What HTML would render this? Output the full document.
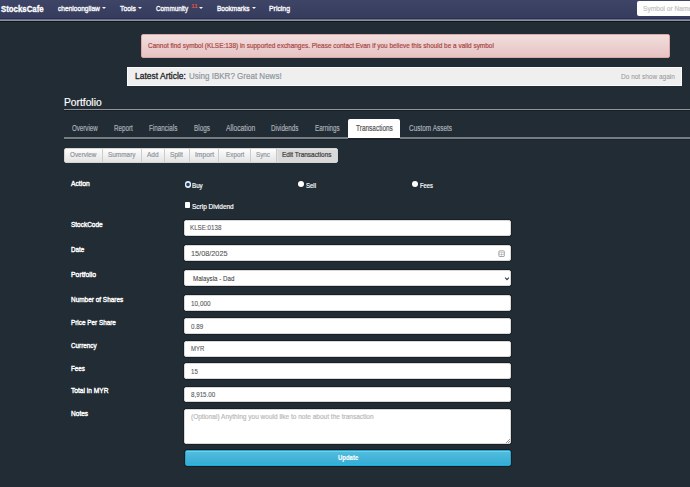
<!DOCTYPE html>
<html><head><meta charset="utf-8">
<style>
*{box-sizing:border-box;margin:0;padding:0}
html,body{width:690px;height:487px;overflow:hidden}
body{background:#222c34;font-family:"Liberation Sans",sans-serif;position:relative;color:#fff}
.a{position:absolute}
.t{position:absolute;white-space:nowrap;transform-origin:0 0;-webkit-text-stroke:0.2px currentColor}
#nav{left:0;top:0;width:690px;height:18px;background:linear-gradient(#3f4567,#363c5c)}
.car{position:absolute;width:0;height:0;border-left:2px solid transparent;border-right:2px solid transparent;border-top:2px solid #f4f5f8;top:7px}
#search{left:637px;top:1px;width:60px;height:15px;background:#fff;border-radius:2px}
#alert{left:140.5px;top:33.5px;width:529px;height:24.5px;border:1px solid #dca7a7;border-radius:2px;background:linear-gradient(#f2dede,#e7c3c3)}
#art{left:127px;top:67px;width:555px;height:19px;background:#efefef;border:1px solid #fafafa}
#pl{left:64px;top:109px;width:626px;height:1px;background:#90959a;box-shadow:0 1px 0 #181f26}
#tabact{left:348px;top:119px;width:52px;height:19px;background:#fff;border-radius:2px 2px 0 0}
#tl{left:64px;top:137px;width:626px;height:2px;background:#757c82}
#sub{left:64px;top:147.6px;width:273.6px;height:15.4px;border-radius:2px;background:linear-gradient(#fdfdfd,#e4e4e4);border:1px solid #d4d4d4;overflow:hidden}
.sd{position:absolute;top:0;width:1px;height:14px;background:#cdcdcd}
#subact{left:210.6px;top:0;width:62px;height:14px;background:#d9d9d9;box-shadow:inset 0 0 0 1px #e2e2e2;border-left:1px solid #c8c8c8}
.inp{left:184.4px;width:327px;height:16.2px;background:#fff;border-radius:2px;border:1px solid #d8d8d8;box-shadow:0 0 0 0.7px #161c22}
.rad{width:6px;height:6px;border-radius:50%;background:#fff}
#upd{left:184.7px;top:450.3px;width:326.6px;height:15.7px;border-radius:2px;background:linear-gradient(#55bddd,#33acd6);border:1px solid #2aa4c9;box-shadow:0 0 0 0.7px #15191e,inset 0 1px 0 #6ad2f0,inset 0 -1px 0 #27b6e6}
</style></head><body>
<div class="a" id="nav"></div>
<div class="a" style="left:0;top:18px;width:690px;height:1px;background:#2a3050"></div>
<div class="a" style="left:0;top:19px;width:690px;height:1px;background:#6a6e8a"></div>
<div class="a" style="left:0;top:20px;width:690px;height:1px;background:#8c9296"></div>
<div class="a" style="left:0;top:21px;width:690px;height:1px;background:#0e161d"></div>
<div class="car" style="left:102.2px"></div>
<div class="car" style="left:138.3px"></div>
<div class="car" style="left:199px"></div>
<div class="car" style="left:252px"></div>
<div class="a" id="search"></div>

<div class="a" id="alert"></div>
<div class="a" id="art"></div>
<div class="a" id="pl"></div>
<div class="a" id="tl"></div>
<div class="a" style="left:64px;top:139px;width:626px;height:1px;background:#1b2229"></div>
<div class="a" id="tabact"></div>
<div class="a" style="left:348px;top:138px;width:52px;height:2px;background:#1b2229"></div>

<div class="a" id="sub">
  <div class="sd" style="left:36.8px"></div>
  <div class="sd" style="left:75.8px"></div>
  <div class="sd" style="left:99.1px"></div>
  <div class="sd" style="left:124.1px"></div>
  <div class="sd" style="left:153.2px"></div>
  <div class="sd" style="left:184.7px"></div>
  <div class="a" id="subact"></div>
</div>

<div class="a rad" style="left:184.5px;top:181.4px;width:6.8px;height:6.8px;background:radial-gradient(circle at 50% 50%,#1f3f73 0,#1f3f73 1.1px,#6f94c6 1.7px,#eef3f9 2.2px)"></div>
<div class="a rad" style="left:298.2px;top:181.1px;width:6.2px;height:6.2px"></div>
<div class="a rad" style="left:411.6px;top:181.1px;width:6.2px;height:6.2px"></div>
<div class="a" style="left:184.6px;top:202.2px;width:5.9px;height:5.8px;background:#fff;border-radius:0.8px"></div>

<div class="a inp" style="top:220px"></div>
<div class="a inp" style="top:245px"></div>
<div class="a inp" style="top:270.2px"></div>
<div class="a inp" style="top:295.4px;height:15.5px"></div>
<div class="a inp" style="top:318.3px;height:15.6px"></div>
<div class="a inp" style="top:341px;height:15.5px"></div>
<div class="a inp" style="top:363.4px;height:15.8px"></div>
<div class="a inp" style="top:386.6px;height:15.5px"></div>
<div class="a inp" style="top:409px;height:34.6px"></div>
<div class="a" id="upd"></div>
<svg class="a" style="left:497.5px;top:249.6px" width="7" height="7" viewBox="0 0 7 7"><rect x="0.9" y="0.9" width="5.4" height="5.6" rx="0.6" fill="none" stroke="#8a8a8a" stroke-width="0.8"/><path d="M0.9 2.7H6.3M0.9 4.5H6.3M3.6 2.7V6.5" stroke="#b0b0b0" stroke-width="0.6"/></svg>
<svg class="a" style="left:504px;top:275.5px" width="6" height="5" viewBox="0 0 6 5"><path d="M1.1 1.6L3 3.6L4.9 1.6" fill="none" stroke="#3a3a3a" stroke-width="1.1"/></svg>
<div class="a" style="left:505.5px;top:438.5px;width:4px;height:4px;background:linear-gradient(135deg,transparent 45%,#999 45%,#999 55%,transparent 55%,transparent 75%,#999 75%,#999 85%,transparent 85%)"></div>
<div class="t" style="left:1.40px;top:3.65px;font-size:9.39px;line-height:9.39px;color:#ffffff;font-weight:bold;transform:scaleX(0.8338);-webkit-text-stroke:0.35px #fff">StocksCafe</div>
<div class="t" style="left:57.60px;top:4.74px;font-size:8.11px;line-height:8.11px;color:#f4f5f8;font-weight:normal;transform:scaleX(0.8163);-webkit-text-stroke:0.42px #f4f5f8">chenloongliaw</div>
<div class="t" style="left:120.00px;top:4.74px;font-size:8.11px;line-height:8.11px;color:#f4f5f8;font-weight:normal;transform:scaleX(0.8383);-webkit-text-stroke:0.42px #f4f5f8">Tools</div>
<div class="t" style="left:155.90px;top:4.74px;font-size:8.11px;line-height:8.11px;color:#f4f5f8;font-weight:normal;transform:scaleX(0.7832);-webkit-text-stroke:0.42px #f4f5f8">Community</div>
<div class="t" style="left:216.50px;top:4.74px;font-size:8.11px;line-height:8.11px;color:#f4f5f8;font-weight:normal;transform:scaleX(0.8038);-webkit-text-stroke:0.42px #f4f5f8">Bookmarks</div>
<div class="t" style="left:269.00px;top:4.74px;font-size:8.11px;line-height:8.11px;color:#f4f5f8;font-weight:normal;transform:scaleX(0.8499);-webkit-text-stroke:0.42px #f4f5f8">Pricing</div>
<div class="t" style="left:191.30px;top:3.22px;font-size:6.00px;line-height:6.00px;color:#e0553f;font-weight:normal;transform:scaleX(1.0000);">11</div>
<div class="t" style="left:642.50px;top:4.74px;font-size:7.40px;line-height:7.40px;color:#c2c2c2;font-weight:normal;transform:scaleX(0.8939);">Symbol or Name</div>
<div class="t" style="left:148.00px;top:42.26px;font-size:7.96px;line-height:7.96px;color:#a94442;font-weight:normal;transform:scaleX(0.8089);">Cannot find symbol (KLSE:138) in supported exchanges. Please contact Evan if you believe this should be a valid symbol</div>
<div class="t" style="left:135.40px;top:70.95px;font-size:9.39px;line-height:9.39px;color:#222222;font-weight:normal;transform:scaleX(0.9041);-webkit-text-stroke:0.3px #222">Latest Article:</div>
<div class="t" style="left:188.60px;top:70.95px;font-size:9.39px;line-height:9.39px;color:#8d959c;font-weight:normal;transform:scaleX(0.8546);">Using IBKR? Great News!</div>
<div class="t" style="left:620.60px;top:72.56px;font-size:7.25px;line-height:7.25px;color:#979797;font-weight:normal;transform:scaleX(0.8980);-webkit-text-stroke:0.05px currentColor">Do not show again</div>
<div class="t" style="left:64.10px;top:97.45px;font-size:10.81px;line-height:10.81px;color:#ffffff;font-weight:normal;transform:scaleX(0.9494);">Portfolio</div>
<div class="t" style="left:71.70px;top:123.56px;font-size:8.68px;line-height:8.68px;color:#a9b0b7;font-weight:normal;transform:scaleX(0.7088);">Overview</div>
<div class="t" style="left:113.70px;top:123.56px;font-size:8.68px;line-height:8.68px;color:#a9b0b7;font-weight:normal;transform:scaleX(0.7187);">Report</div>
<div class="t" style="left:149.00px;top:123.56px;font-size:8.68px;line-height:8.68px;color:#a9b0b7;font-weight:normal;transform:scaleX(0.7265);">Financials</div>
<div class="t" style="left:193.70px;top:123.56px;font-size:8.68px;line-height:8.68px;color:#a9b0b7;font-weight:normal;transform:scaleX(0.7301);">Blogs</div>
<div class="t" style="left:225.90px;top:123.56px;font-size:8.68px;line-height:8.68px;color:#a9b0b7;font-weight:normal;transform:scaleX(0.7768);">Allocation</div>
<div class="t" style="left:270.90px;top:123.56px;font-size:8.68px;line-height:8.68px;color:#a9b0b7;font-weight:normal;transform:scaleX(0.7187);">Dividends</div>
<div class="t" style="left:314.80px;top:123.56px;font-size:8.68px;line-height:8.68px;color:#a9b0b7;font-weight:normal;transform:scaleX(0.7176);">Earnings</div>
<div class="t" style="left:355.70px;top:123.56px;font-size:8.68px;line-height:8.68px;color:#555555;font-weight:normal;transform:scaleX(0.7474);">Transactions</div>
<div class="t" style="left:409.00px;top:123.56px;font-size:8.68px;line-height:8.68px;color:#a9b0b7;font-weight:normal;transform:scaleX(0.7439);">Custom Assets</div>
<div class="t" style="left:69.80px;top:152.38px;font-size:7.11px;line-height:7.11px;color:#90969c;font-weight:normal;transform:scaleX(0.8920);">Overview</div>
<div class="t" style="left:107.80px;top:152.38px;font-size:7.11px;line-height:7.11px;color:#90969c;font-weight:normal;transform:scaleX(0.9040);">Summary</div>
<div class="t" style="left:147.40px;top:152.38px;font-size:7.11px;line-height:7.11px;color:#90969c;font-weight:normal;transform:scaleX(0.9137);">Add</div>
<div class="t" style="left:170.40px;top:152.38px;font-size:7.11px;line-height:7.11px;color:#90969c;font-weight:normal;transform:scaleX(0.9311);">Split</div>
<div class="t" style="left:194.80px;top:152.38px;font-size:7.11px;line-height:7.11px;color:#90969c;font-weight:normal;transform:scaleX(0.9468);">Import</div>
<div class="t" style="left:225.90px;top:152.38px;font-size:7.11px;line-height:7.11px;color:#90969c;font-weight:normal;transform:scaleX(0.8944);">Export</div>
<div class="t" style="left:255.70px;top:152.38px;font-size:7.11px;line-height:7.11px;color:#90969c;font-weight:normal;transform:scaleX(0.8800);">Sync</div>
<div class="t" style="left:281.70px;top:152.38px;font-size:7.11px;line-height:7.11px;color:#3a3a3a;font-weight:normal;transform:scaleX(0.9073);">Edit Transactions</div>
<div class="t" style="left:71.00px;top:179.94px;font-size:7.40px;line-height:7.40px;color:#ffffff;font-weight:normal;transform:scaleX(0.9071);-webkit-text-stroke:0.4px #fff">Action</div>
<div class="t" style="left:71.00px;top:221.14px;font-size:7.40px;line-height:7.40px;color:#ffffff;font-weight:normal;transform:scaleX(0.8756);-webkit-text-stroke:0.4px #fff">StockCode</div>
<div class="t" style="left:71.00px;top:247.28px;font-size:7.11px;line-height:7.11px;color:#ffffff;font-weight:normal;transform:scaleX(0.8829);-webkit-text-stroke:0.4px #fff">Date</div>
<div class="t" style="left:71.00px;top:270.74px;font-size:7.40px;line-height:7.40px;color:#ffffff;font-weight:normal;transform:scaleX(0.9275);-webkit-text-stroke:0.4px #fff">Portfolio</div>
<div class="t" style="left:71.00px;top:295.74px;font-size:7.40px;line-height:7.40px;color:#ffffff;font-weight:normal;transform:scaleX(0.8710);-webkit-text-stroke:0.4px #fff">Number of Shares</div>
<div class="t" style="left:70.80px;top:318.72px;font-size:7.54px;line-height:7.54px;color:#ffffff;font-weight:normal;transform:scaleX(0.8436);-webkit-text-stroke:0.4px #fff">Price Per Share</div>
<div class="t" style="left:70.80px;top:341.74px;font-size:7.40px;line-height:7.40px;color:#ffffff;font-weight:normal;transform:scaleX(0.8535);-webkit-text-stroke:0.4px #fff">Currency</div>
<div class="t" style="left:70.80px;top:365.34px;font-size:7.40px;line-height:7.40px;color:#ffffff;font-weight:normal;transform:scaleX(0.8439);-webkit-text-stroke:0.4px #fff">Fees</div>
<div class="t" style="left:70.80px;top:386.94px;font-size:7.40px;line-height:7.40px;color:#ffffff;font-weight:normal;transform:scaleX(0.8945);-webkit-text-stroke:0.4px #fff">Total in MYR</div>
<div class="t" style="left:70.80px;top:409.94px;font-size:7.40px;line-height:7.40px;color:#ffffff;font-weight:normal;transform:scaleX(0.8887);-webkit-text-stroke:0.4px #fff">Notes</div>
<div class="t" style="left:192.00px;top:181.56px;font-size:7.25px;line-height:7.25px;color:#ffffff;font-weight:normal;transform:scaleX(0.8548);">Buy</div>
<div class="t" style="left:305.70px;top:181.56px;font-size:7.25px;line-height:7.25px;color:#ffffff;font-weight:normal;transform:scaleX(0.8254);">Sell</div>
<div class="t" style="left:419.80px;top:181.56px;font-size:7.25px;line-height:7.25px;color:#ffffff;font-weight:normal;transform:scaleX(0.8003);">Fees</div>
<div class="t" style="left:192.00px;top:203.34px;font-size:7.40px;line-height:7.40px;color:#ffffff;font-weight:normal;transform:scaleX(0.8747);">Scrip Dividend</div>
<div class="t" style="left:190.40px;top:224.24px;font-size:7.40px;line-height:7.40px;color:#555555;font-weight:normal;transform:scaleX(0.8411);-webkit-text-stroke:0.08px currentColor">KLSE:0138</div>
<div class="t" style="left:191.20px;top:249.56px;font-size:7.25px;line-height:7.25px;color:#555555;font-weight:normal;transform:scaleX(1.0068);-webkit-text-stroke:0.08px currentColor">15/08/2025</div>
<div class="t" style="left:193.00px;top:274.86px;font-size:7.25px;line-height:7.25px;color:#3c3c3c;font-weight:normal;transform:scaleX(0.8548);-webkit-text-stroke:0.08px currentColor">Malaysia - Dad</div>
<div class="t" style="left:191.00px;top:299.56px;font-size:7.25px;line-height:7.25px;color:#555555;font-weight:normal;transform:scaleX(0.8807);-webkit-text-stroke:0.08px currentColor">10,000</div>
<div class="t" style="left:190.90px;top:323.88px;font-size:7.11px;line-height:7.11px;color:#555555;font-weight:normal;transform:scaleX(0.8788);-webkit-text-stroke:0.08px currentColor">0.89</div>
<div class="t" style="left:190.90px;top:345.26px;font-size:7.25px;line-height:7.25px;color:#555555;font-weight:normal;transform:scaleX(0.8252);-webkit-text-stroke:0.08px currentColor">MYR</div>
<div class="t" style="left:190.90px;top:369.02px;font-size:6.83px;line-height:6.83px;color:#555555;font-weight:normal;transform:scaleX(0.8987);-webkit-text-stroke:0.08px currentColor">15</div>
<div class="t" style="left:190.90px;top:390.64px;font-size:7.40px;line-height:7.40px;color:#555555;font-weight:normal;transform:scaleX(0.8425);-webkit-text-stroke:0.08px currentColor">8,915.00</div>
<div class="t" style="left:190.90px;top:412.68px;font-size:7.82px;line-height:7.82px;color:#b9b9b9;font-weight:normal;transform:scaleX(0.8343);">(Optional) Anything you would like to note about the transaction</div>
<div class="t" style="left:338.00px;top:454.98px;font-size:7.11px;line-height:7.11px;color:#ffffff;font-weight:bold;transform:scaleX(0.8409);-webkit-text-stroke:0.12px currentColor">Update</div>
</body></html>
